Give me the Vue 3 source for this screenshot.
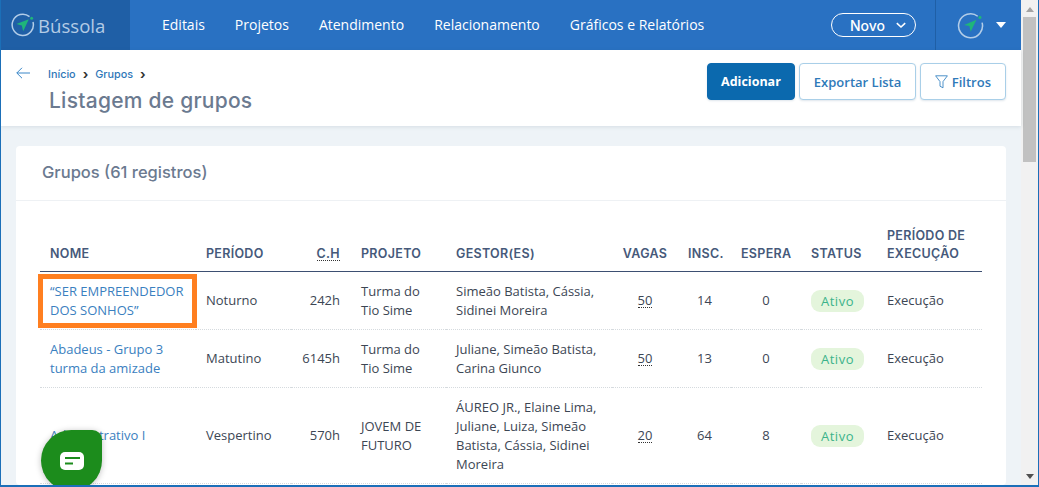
<script setup>
const navItems = ['Editais', 'Projetos', 'Atendimento', 'Relacionamento', 'Gráficos e Relatórios'];

const groups = [
  {
    name: '“SER EMPREENDEDOR DOS SONHOS”',
    period: 'Noturno',
    hours: '242h',
    project: 'Turma do Tio Sime',
    managers: 'Simeão Batista, Cássia, Sidinei Moreira',
    spots: 50,
    enrolled: 14,
    waiting: 0,
    highlighted: true
  },
  {
    name: 'Abadeus - Grupo 3 turma da amizade',
    period: 'Matutino',
    hours: '6145h',
    project: 'Turma do Tio Sime',
    managers: 'Juliane, Simeão Batista, Carina Giunco',
    spots: 50,
    enrolled: 13,
    waiting: 0
  },
  {
    name: 'Administrativo I',
    period: 'Vespertino',
    hours: '570h',
    project: 'JOVEM DE FUTURO',
    managers: 'ÁUREO JR., Elaine Lima, Juliane, Luiza, Simeão Batista, Cássia, Sidinei Moreira',
    spots: 20,
    enrolled: 64,
    waiting: 8
  }
];
</script>

<template>
  <div class="frame">
    <div class="main">
      <header class="topbar">
        <div class="brand">
          <svg class="compass" width="24" height="24" viewBox="0 0 24 24" fill="none">
            <path d="M18.5 3.6A10.6 10.6 0 1 0 22 9" stroke="#b3cde8" stroke-width="1.5" />
            <circle cx="20.6" cy="5.2" r="1.5" fill="#1fb57a" />
            <path d="M17.8 6.2 5.4 11l5.4 1.4 1.4 5.8z" fill="#1fb57a" />
          </svg>
          <span>Bússola</span>
        </div>
        <nav class="nav">
          <a v-for="item in navItems" :key="item">{{ item }}</a>
        </nav>
        <button class="new-btn">
          Novo
          <svg width="10" height="7" viewBox="0 0 10 7" fill="none">
            <path d="M.8 1.2 5 5l4.2-3.8" stroke="#fff" stroke-width="1.6" />
          </svg>
        </button>
        <div class="user">
          <svg width="27" height="27" viewBox="0 0 28 28" fill="none">
            <path d="M21.5 4.4A12.4 12.4 0 1 0 26 11" stroke="#b3cde8" stroke-width="1.6" />
            <circle cx="23.8" cy="5.6" r="1.6" fill="#1fb57a" />
            <path d="M20.2 8 7.4 13.4l5.4 1.2 1.4 6z" fill="#1fb57a" />
          </svg>
          <span class="caret"></span>
        </div>
      </header>

      <section class="subheader">
        <svg class="back" width="14" height="12" viewBox="0 0 14 12" fill="none">
          <path d="M6 .8.8 6 6 11.2M.8 6H14" stroke="#3b87c8" stroke-width="1" />
        </svg>
        <div class="crumbs">
          <div class="breadcrumb">
            <a>Início</a><b>›</b><a>Grupos</a><b>›</b>
          </div>
          <h1>Listagem de grupos</h1>
        </div>
        <div class="actions">
          <button class="btn primary">Adicionar</button>
          <button class="btn export">Exportar Lista</button>
          <button class="btn filters">
            <svg width="13" height="14" viewBox="0 0 13 14" fill="none">
              <path d="M.6.8h11.8L8 6.6v6.2l-3-1.6V6.6z" stroke="#3a86c4" stroke-width=".9" stroke-linejoin="round" />
            </svg>
            Filtros
          </button>
        </div>
      </section>

      <div class="content">
        <section class="card">
          <h2>Grupos (61 registros)</h2>
          <div class="table-wrap">
            <table>
              <colgroup>
                <col style="width: 156px" />
                <col style="width: 95px" />
                <col style="width: 60px" />
                <col style="width: 95px" />
                <col style="width: 166px" />
                <col style="width: 66px" />
                <col style="width: 53px" />
                <col style="width: 70px" />
                <col style="width: 76px" />
                <col style="width: 105px" />
              </colgroup>
              <thead>
                <tr>
                  <th>NOME</th>
                  <th>PERÍODO</th>
                  <th class="right"><abbr>C.H</abbr></th>
                  <th>PROJETO</th>
                  <th>GESTOR(ES)</th>
                  <th class="center">VAGAS</th>
                  <th class="center">INSC.</th>
                  <th class="center">ESPERA</th>
                  <th>STATUS</th>
                  <th>PERÍODO DE EXECUÇÃO</th>
                </tr>
              </thead>
              <tbody>
                <tr v-for="group in groups" :key="group.name">
                  <td class="name">
                    <a>{{ group.name }}</a>
                    <span v-if="group.highlighted" class="highlight"></span>
                  </td>
                  <td>{{ group.period }}</td>
                  <td class="right">{{ group.hours }}</td>
                  <td>{{ group.project }}</td>
                  <td>{{ group.managers }}</td>
                  <td class="center"><abbr>{{ group.spots }}</abbr></td>
                  <td class="center">{{ group.enrolled }}</td>
                  <td class="center">{{ group.waiting }}</td>
                  <td><span class="status">Ativo</span></td>
                  <td>Execução</td>
                </tr>
              </tbody>
            </table>
          </div>
        </section>
      </div>
    </div>

    <aside class="scrollbar">
      <span class="arrow up"></span>
      <span class="thumb"></span>
      <span class="arrow down"></span>
    </aside>

    <button class="chat">
      <svg width="24" height="18" viewBox="0 0 24 18">
        <rect width="24" height="18" rx="5" fill="#fff" />
        <rect x="5" y="5" width="15" height="2" fill="#1c8c1c" />
        <rect x="5" y="10.5" width="8" height="2" fill="#1c8c1c" />
      </svg>
    </button>
  </div>
</template>

<style>
html,
body {
  margin: 0;
  overflow: hidden;
}
</style>

<style scoped>
.frame {
  position: relative;
  display: flex;
  width: 1039px;
  height: 487px;
  box-sizing: border-box;
  border-left: 1px solid #1b6fb8;
  border-right: 1px solid #1b6fb8;
  border-bottom: 2px solid #1b6fb8;
  overflow: hidden;
  font-family: "Open Sans", sans-serif;
  color: #3c4654;
  background: #eef3f7;
}

.main {
  flex: 1;
  min-width: 0;
  display: flex;
  flex-direction: column;
}

.topbar {
  flex: none;
  display: flex;
  align-items: center;
  height: 50px;
  background: #2971c2;
  color: #fff;
}

.brand {
  display: flex;
  align-items: center;
  gap: 3px;
  width: 129px;
  height: 100%;
  box-sizing: border-box;
  padding-left: 10px;
  background: #1f5fa6;
  color: #b3cbe5;
  font-size: 18.6px;
}

.nav {
  display: flex;
  gap: 30px;
  margin-left: 32px;
  padding-bottom: 2px;
  font-size: 14px;
  flex: 1;
}

.new-btn {
  display: flex;
  align-items: center;
  gap: 11px;
  width: 85px;
  height: 24px;
  padding: 0 0 0 18px;
  border: 1px solid #fff;
  border-radius: 12px;
  background: transparent;
  color: #fff;
  font: 500 14px "Inter", sans-serif;
}

.user {
  display: flex;
  align-items: center;
  gap: 12px;
  width: 86px;
  height: 100%;
  box-sizing: border-box;
  margin-left: 19px;
  padding-left: 21px;
  border-left: 1px solid #1f5fa6;
}

.caret {
  width: 0;
  height: 0;
  border-left: 5px solid transparent;
  border-right: 5px solid transparent;
  border-top: 6px solid #fff;
}

.subheader {
  flex: none;
  position: relative;
  display: flex;
  align-items: flex-start;
  height: 76px;
  background: #fff;
  box-shadow: 0 1px 4px rgba(40, 70, 100, 0.12);
}

.back {
  margin: 17px 0 0 15px;
}

.crumbs {
  margin-left: 18px;
  flex: 1;
}

.breadcrumb {
  display: flex;
  align-items: center;
  gap: 7px;
  margin-top: 17px;
  height: 14px;
  color: #2f77b8;
  font: 500 10.8px "Inter", sans-serif;
}

.breadcrumb b {
  color: #333;
  font-size: 13px;
}

h1 {
  margin: 7px 0 0 1px;
  color: #6b7a90;
  font: 500 21px "Inter", sans-serif;
  letter-spacing: 0.25px;
}

.actions {
  display: flex;
  gap: 4px;
  margin: 13px 15px 0 0;
}

.btn {
  display: flex;
  align-items: center;
  gap: 4px;
  height: 37px;
  padding: 0 14px;
  border: 1px solid #a9cfe8;
  border-radius: 4px;
  background: #fff;
  color: #2f7ab9;
  font: 600 13px "Open Sans", sans-serif;
  box-shadow: 0 1px 2px rgba(40, 90, 130, 0.15);
}

.btn.export {
  padding: 0 13.5px;
}

.btn.primary {
  padding: 0 13.5px;
  border-color: #0b69ae;
  background: #0b69ae;
  color: #fff;
  font-size: 12.5px;
  font-weight: 700;
}

.content {
  flex: 1;
  min-height: 0;
  padding: 20px 15px 0;
}

.card {
  border-radius: 4px;
  background: #fff;
  height: 100%;
}

h2 {
  margin: 0;
  height: 54px;
  padding-left: 26px;
  border-bottom: 1px solid #eef1f4;
  color: #6b7a90;
  font: 500 16.5px/53px "Inter", sans-serif;
}

.table-wrap {
  padding: 20px 24px 0;
}

table {
  width: 942px;
  table-layout: fixed;
  border-collapse: collapse;
  font-size: 13px;
  line-height: 19px;
}

th {
  padding: 6px 10px 8px;
  border-bottom: 1px solid #3d4f72;
  color: #46597a;
  font: 600 12.5px/18px "Inter", sans-serif;
  letter-spacing: 0.3px;
  text-align: left;
  vertical-align: bottom;
}

td {
  height: 57px;
  padding: 0 10px;
  border-bottom: 1px dotted #d5dade;
  vertical-align: middle;
}

tbody tr:last-child td {
  height: 95px;
}

th.right,
td.right {
  padding-right: 11px;
  text-align: right;
}

th.center,
td.center {
  text-align: center;
}

.name {
  position: relative;
  color: #3a80c0;
}

.highlight {
  position: absolute;
  inset: 2px -1px 1px -2px;
  border: 5px solid #ff7f20;
}

abbr {
  border-bottom: 1px dotted #333;
  line-height: 13px;
  display: inline-block;
}

.status {
  display: inline-block;
  padding: 2px 10px 1px;
  border-radius: 9px;
  background: #e4f5dc;
  color: #3bb38a;
  letter-spacing: 0.5px;
}

.scrollbar {
  flex: none;
  display: flex;
  flex-direction: column;
  align-items: center;
  width: 17px;
  background: #f1f1f1;
}

.arrow {
  flex: none;
  width: 0;
  height: 0;
  border-left: 4px solid transparent;
  border-right: 4px solid transparent;
}

.arrow.up {
  margin: 7px 0 5px;
  border-bottom: 5px solid #a3a3a3;
}

.arrow.down {
  margin: auto 0 6px;
  border-top: 5px solid #505050;
}

.thumb {
  width: 13px;
  height: 145px;
  background: #c1c1c1;
}

.chat {
  position: absolute;
  left: 40px;
  top: 430px;
  display: flex;
  align-items: center;
  justify-content: center;
  width: 61px;
  height: 61px;
  padding: 1px 0 0;
  border: none;
  border-radius: 50% 16% 50% 50%;
  background: #1c8c1c;
  box-shadow: 0 1px 6px rgba(0, 0, 0, 0.25);
}
</style>
